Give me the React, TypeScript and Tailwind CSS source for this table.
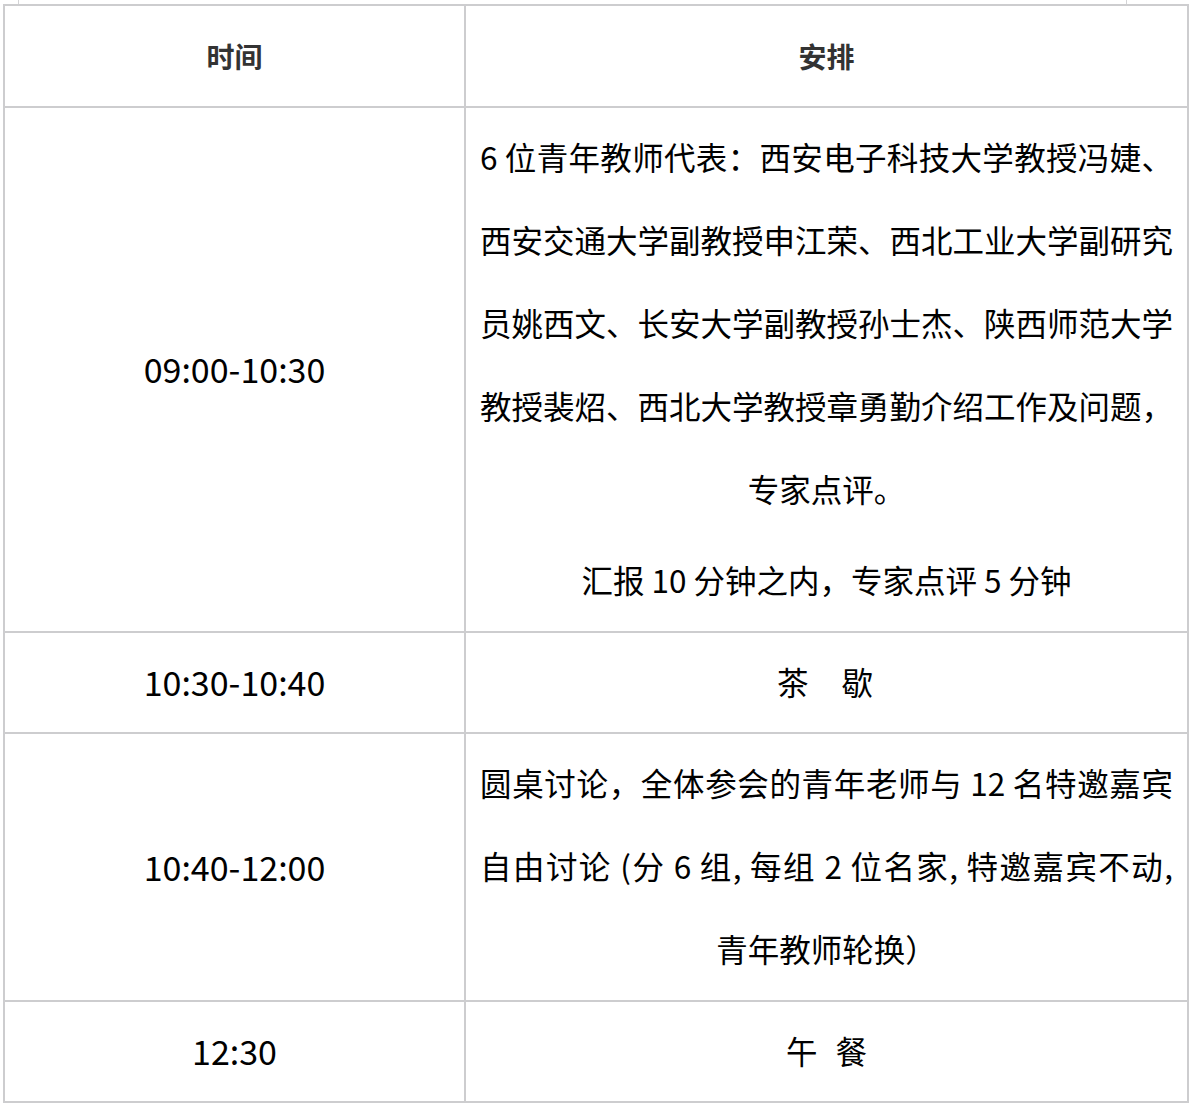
const font = "[font-family:'Noto_Sans_CJK_SC',sans-serif]";

const Line = ({ children, full = true }: { children: React.ReactNode; full?: boolean }) => (
  <div className={full ? "whitespace-nowrap text-justify [text-align-last:justify]" : "whitespace-nowrap text-center"}>
    {children}
  </div>
);

const TimeCell = ({ children }: { children: React.ReactNode }) => (
  <div className="flex items-center justify-center border-r-2 border-b-2 border-[#cdcdcf] pb-[2px] text-[34px] text-black">
    {children}
  </div>
);

const PlanCell = ({ children, single = false }: { children: React.ReactNode; single?: boolean }) => (
  <div
    className={`flex min-w-0 flex-col justify-center border-r-2 border-b-2 border-[#cdcdcf] pl-[14px] pr-[14px] text-[31.5px] leading-[83px] text-black ${
      single ? "h-[101px] pb-[2px]" : "pt-[7px] pb-[10px]"
    }`}
  >
    {children}
  </div>
);

export default function App() {
  return (
    <div className={`min-h-[1109px] w-[1195px] bg-white ${font}`}>
      <div className="ml-[18px] h-[4px] w-[1109px] border-x border-[#d4d4d6]" />
      <div className="ml-[3px] grid w-[1186px] grid-cols-[461px_723px] border-l-2 border-t-2 border-[#cdcdcf]">
        {/* header */}
        <div className="flex h-[102px] items-center justify-center border-r-2 border-b-2 border-[#cdcdcf] text-[28px] font-bold text-[#333]">
          时间
        </div>
        <div className="flex h-[102px] items-center justify-center border-r-2 border-b-2 border-[#cdcdcf] text-[28px] font-bold text-[#333]">
          安排
        </div>

        {/* 09:00-10:30 */}
        <TimeCell>09:00-10:30</TimeCell>
        <PlanCell>
          <Line>6 位青年教师代表：西安电子科技大学教授冯婕、</Line>
          <Line>西安交通大学副教授申江荣、西北工业大学副研究</Line>
          <Line>员姚西文、长安大学副教授孙士杰、陕西师范大学</Line>
          <Line>教授裴炤、西北大学教授章勇勤介绍工作及问题，</Line>
          <Line full={false}>专家点评。</Line>
          <div className="mt-[8px]">
            <Line full={false}>汇报 10 分钟之内，专家点评 5 分钟</Line>
          </div>
        </PlanCell>

        {/* tea break */}
        <TimeCell>10:30-10:40</TimeCell>
        <PlanCell single>
          <div className="flex justify-center gap-[33px] pr-[3px]">
            <span>茶</span>
            <span>歇</span>
          </div>
        </PlanCell>

        {/* round table */}
        <TimeCell>10:40-12:00</TimeCell>
        <PlanCell>
          <Line>圆桌讨论，全体参会的青年老师与 12 名特邀嘉宾</Line>
          <Line>自由讨论 (分 6 组, 每组 2 位名家, 特邀嘉宾不动,</Line>
          <Line full={false}>青年教师轮换）</Line>
        </PlanCell>

        {/* lunch */}
        <TimeCell>12:30</TimeCell>
        <PlanCell single>
          <div className="flex justify-center gap-[18px]">
            <span>午</span>
            <span>餐</span>
          </div>
        </PlanCell>
      </div>
    </div>
  );
}
